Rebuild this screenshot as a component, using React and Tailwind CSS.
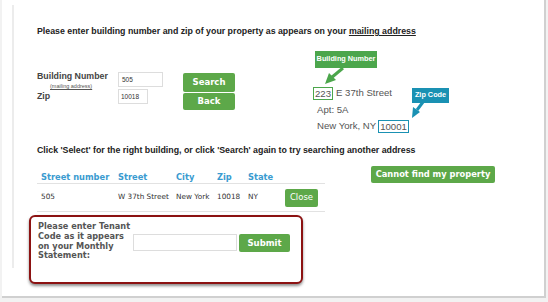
export default function App() {
  const verdana = "font-['DejaVu_Sans',Verdana,sans-serif]";
  return (
    <div className="w-[548px] h-[302px] overflow-hidden bg-[#f2f2f2] font-['Liberation_Sans',Arial,sans-serif]">
      <div className="ml-[2px] w-[544px] h-[298px] bg-white border-r-2 border-b-2 border-[#d0d0d0] pt-[5px] pl-[10px]">
        <div className="h-[263px] border-l-2 border-[#ececec] pl-[23px] pt-[20px]">
          {/* heading */}
          <p className="text-[8.8px] leading-[12px] font-bold text-[#222] whitespace-nowrap">
            Please enter building number and zip of your property as appears on your{" "}
            <span className="underline">mailing address</span>
          </p>

          <div className="flex mt-[15px]">
            {/* form */}
            <div className="flex items-start w-[276px]">
              <div className="w-[81px] mt-[19px] text-[#444]">
                <div className="text-[8.8px] leading-[10px] font-bold">Building Number</div>
                <div className="text-[5.5px] leading-[10px] underline ml-[13px] text-[#555]">(mailing address)</div>
                <div className="text-[8.8px] leading-[10px] font-bold">Zip</div>
              </div>
              <div className="flex flex-col gap-[2px] mt-[20px]">
                <div className="w-[45px] h-[15px] border border-[#ddd] text-[6.5px] leading-[13px] pl-[3px] text-[#333]">505</div>
                <div className="w-[30px] h-[15px] border border-[#ddd] text-[6.5px] leading-[13px] pl-[2px] text-[#333]">10018</div>
              </div>
              <div className={`flex flex-col gap-[1px] ml-[20px] mt-[21px] ${verdana}`}>
                <div className="w-[52px] h-[19px] rounded-[2px] bg-[#5da849] text-white text-[8.5px] font-bold flex items-center justify-center">Search</div>
                <div className="w-[52px] h-[17px] rounded-[2px] bg-[#5da849] text-white text-[8.5px] font-bold flex items-center justify-center">Back</div>
              </div>
            </div>

            {/* address callout graphic */}
            <div className="relative w-[160px] h-[85px] text-[9.6px] text-[#555]">
              <div className="absolute left-[2px] top-[-1px] w-[62px] h-[17px] bg-[#4ca64c] text-white text-[7.3px] font-bold flex items-center justify-center">Building Number</div>
              <div className="absolute left-[99px] top-[36px] w-[37px] h-[15px] bg-[#1a91b3] text-white text-[7.3px] font-bold flex items-center justify-center">Zip Code</div>
              <svg className="absolute left-0 top-0" width="160" height="85">
                <line x1="30" y1="16" x2="18" y2="26" stroke="#4ca64c" strokeWidth="3" />
                <polygon points="12,32 16,21 23,28" fill="#4ca64c" />
                <line x1="110" y1="50" x2="104" y2="58" stroke="#1a91b3" strokeWidth="3" />
                <polygon points="99,66 100,55 107,60" fill="#1a91b3" />
              </svg>
              <div className="absolute left-0 top-[33px] flex flex-col">
                <div className="flex items-center h-[16px]">
                  <span className="border-[1.5px] border-[#4ca64c] px-[1px] leading-[11px]">223</span>
                  <span className="ml-[3px]">E 37th Street</span>
                </div>
                <div className="h-[17px] leading-[17px] pl-[4px]">Apt: 5A</div>
                <div className="flex items-center h-[16px] pl-[4px]">
                  <span>New York, NY</span>
                  <span className="ml-[2px] border-[1.5px] border-[#1a91b3] px-[1px] leading-[11px]">10001</span>
                </div>
              </div>
            </div>
          </div>

          <p className="text-[8.8px] leading-[12px] font-bold text-[#222] mt-[7px] whitespace-nowrap">
            Click 'Select' for the right building, or click 'Search' again to try searching another address
          </p>

          <div className="flex items-start">
            <div className={`w-[288px] ${verdana}`}>
              <div className="flex h-[28px] pt-[16px] pl-[4px] border-b border-[#e2e2e2] text-[8.3px] leading-[10px] font-bold text-[#3a9bd0]">
                <span className="w-[77px]">Street number</span>
                <span className="w-[58px]">Street</span>
                <span className="w-[41px]">City</span>
                <span className="w-[31px]">Zip</span>
                <span>State</span>
              </div>
              <div className="flex items-center h-[28px] pl-[4px] border-b border-[#e2e2e2] text-[7.3px] text-[#333]">
                <span className="w-[77px]">505</span>
                <span className="w-[58px] whitespace-nowrap">W 37th Street</span>
                <span className="w-[41px]">New York</span>
                <span className="w-[31px]">10018</span>
                <span className="w-[37px]">NY</span>
                <span className="w-[33px] h-[18px] rounded-[2px] bg-[#5da849] text-white text-[8.5px] flex items-center justify-center">Close</span>
              </div>
            </div>
            <div className={`ml-[46px] mt-[10px] w-[124px] h-[17px] rounded-[2px] bg-[#5da849] text-white text-[8.3px] font-bold flex items-center justify-center whitespace-nowrap ${verdana}`}>
              Cannot find my property
            </div>
          </div>

          <div className={`relative ml-[-8px] mt-[3px] w-[274px] h-[69px] border-2 border-[#8c1212] rounded-[6px] shadow-[0_2px_3px_rgba(0,0,0,0.45)] bg-white flex items-start pl-[7px] pt-[5px] ${verdana}`}>
            <div className="w-[95px] text-[8.2px] leading-[9.8px] font-bold text-[#555] whitespace-nowrap">
              Please enter Tenant<br />
              Code as it appears<br />
              on your Monthly<br />
              Statement:
            </div>
            <div className="mt-[12px] w-[104px] h-[17px] border border-[#ddd]"></div>
            <div className="mt-[12px] ml-[2px] w-[51px] h-[18px] rounded-[2px] bg-[#5da849] text-white text-[8.5px] font-bold flex items-center justify-center">Submit</div>
          </div>
        </div>
      </div>
    </div>
  );
}
